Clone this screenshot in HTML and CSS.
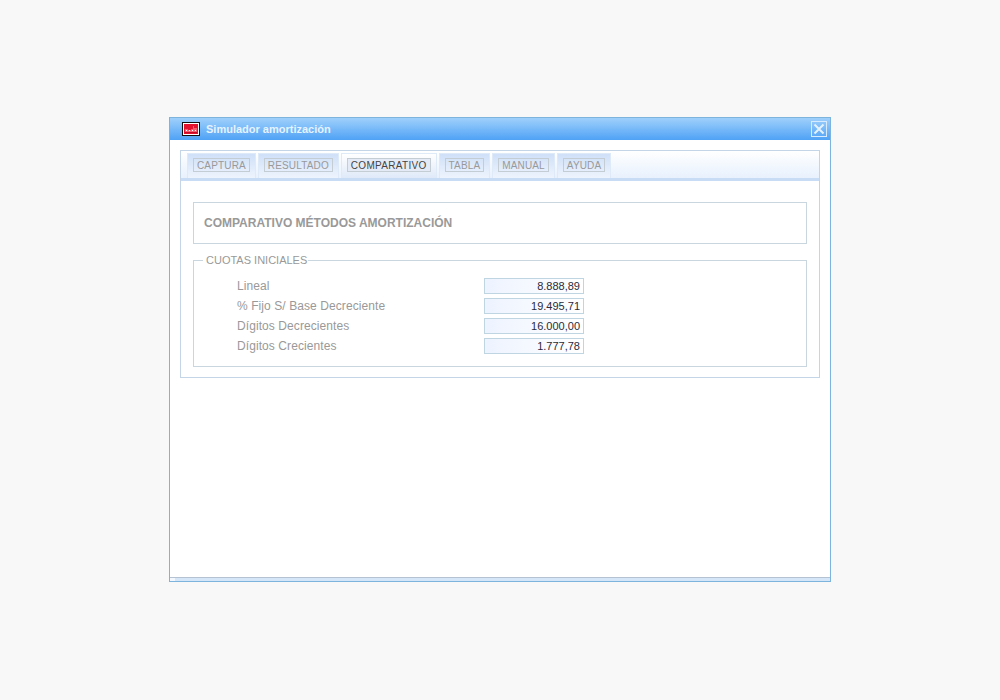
FILE: index.html
```html
<!DOCTYPE html>
<html lang="es">
<head>
<meta charset="utf-8">
<title>Simulador amortización</title>
<link rel="stylesheet" href="styles.css">
</head>
<body>
<div class="window">
  <div class="titlebar">
    <svg class="app-icon" width="18" height="14" viewBox="0 0 18 14">
      <rect x="0.5" y="0.5" width="17" height="13" fill="#e4122e" stroke="#111"/>
      <rect x="1.5" y="1.5" width="15" height="11" fill="none" stroke="#fff"/>
      <path d="M3 11V7h3v1h3V7h2V4h1v2h3v5z" fill="#f4606f"/>
      <path d="M4 8.5h1M7 8.5h1M10 8.5h1M13 8.5h1" stroke="#fff"/>
      <path d="M3 10.5h12" stroke="#c00c24"/>
    </svg>
    <span class="title">Simulador amortización</span>
    <svg class="close" width="16" height="16" viewBox="0 0 16 16">
      <rect x="0.5" y="0.5" width="15" height="15" fill="none" stroke="#d6ebff"/>
      <path d="M3.5 3.5l9 9M12.5 3.5l-9 9" stroke="#e4f2ff" stroke-width="2"/>
    </svg>
  </div>
  <div class="body">
    <div class="panel">
      <div class="tabs">
        <div class="tab"><span class="tab-label">CAPTURA</span></div>
        <div class="tab"><span class="tab-label">RESULTADO</span></div>
        <div class="tab active"><span class="tab-label">COMPARATIVO</span></div>
        <div class="tab"><span class="tab-label">TABLA</span></div>
        <div class="tab"><span class="tab-label">MANUAL</span></div>
        <div class="tab"><span class="tab-label">AYUDA</span></div>
      </div>
      <div class="content">
        <div class="heading">COMPARATIVO MÉTODOS AMORTIZACIÓN</div>
        <fieldset class="group">
          <legend>CUOTAS INICIALES</legend>
          <div class="row"><span class="label">Lineal</span><span class="value">8.888,89</span></div>
          <div class="row"><span class="label">% Fijo S/ Base Decreciente</span><span class="value">19.495,71</span></div>
          <div class="row"><span class="label">Dígitos Decrecientes</span><span class="value">16.000,00</span></div>
          <div class="row"><span class="label">Dígitos Crecientes</span><span class="value">1.777,78</span></div>
        </fieldset>
      </div>
    </div>
  </div>
  <div class="footer"><div class="footer-corner"></div></div>
</div>
</body>
</html>
```
FILE: styles.css
```css
html, body { margin: 0; padding: 0; }
body {
  background: #f8f8f8;
  font-family: "Liberation Sans", Arial, sans-serif;
  height: 700px;
  overflow: hidden;
  padding-top: 117px;
  box-sizing: border-box;
}
.window {
  width: 662px;
  height: 465px;
  margin: 0 auto;
  box-sizing: border-box;
  border: 1px solid #7db4de;
  background: #fff;
  display: flex;
  flex-direction: column;
}
.titlebar {
  height: 22px;
  flex: none;
  background: linear-gradient(to bottom, #9fd0fb, #4fa2f6);
  display: flex;
  align-items: center;
  padding: 0 3px 0 12px;
}
.app-icon { flex: none; }
.title {
  margin-left: 6px;
  color: #e6f3ff;
  font-size: 11px;
  font-weight: bold;
  flex: 1;
}
.close { flex: none; }
.body {
  flex: 1;
  padding: 10px 10px 0;
}
.panel {
  border: 1px solid #c3d5e6;
  height: 228px;
  box-sizing: border-box;
}
.tabs {
  height: 30px;
  box-sizing: border-box;
  display: flex;
  gap: 2px;
  padding: 2px 0 0 6px;
  background: linear-gradient(to bottom, #ffffff, #e8f1fd);
  border-bottom: 3px solid #c8dcf6;
}
.tab {
  height: 25px;
  box-sizing: border-box;
  padding: 4px 5px 0;
  background: linear-gradient(to bottom, #cfe0f8, #eef4fd);
  border: 1px solid #dfeaf8;
  border-bottom: none;
}
.tab.active {
  background: linear-gradient(to bottom, #fff, #dfe9f8);
}
.tab-label {
  display: block;
  height: 14px;
  line-height: 13px;
  box-sizing: border-box;
  padding: 0 3px;
  border: 1px solid #c4ccd4;
  font-size: 10px;
  letter-spacing: 0.15px;
  color: #999;
}
.active .tab-label {
  color: #444;
  background: #e4ebf6;
  letter-spacing: 0.3px;
}
.content {
  padding: 21px 12px 0;
}
.heading {
  height: 42px;
  box-sizing: border-box;
  border: 1px solid #c9d6e0;
  padding-left: 10px;
  line-height: 40px;
  font-size: 12px;
  font-weight: bold;
  color: #999;
}
.group {
  margin: 10px 0 0;
  padding: 9px 0 0;
  height: 113px;
  box-sizing: border-box;
  border: 1px solid #c9d6e0;
}
.group legend {
  margin-left: 9px;
  padding: 0 1px 0 3px;
  font-size: 11px;
  line-height: 13px;
  color: #999;
}
.row {
  display: flex;
  align-items: center;
  height: 20px;
  padding-left: 43px;
}
.label {
  width: 247px;
  font-size: 12px;
  letter-spacing: 0.08px;
  color: #999;
}
.value {
  width: 100px;
  height: 16px;
  box-sizing: border-box;
  border: 1px solid #bfd6e2;
  background: linear-gradient(to right, #edf3ff, #ffffff);
  text-align: right;
  font-size: 11px;
  line-height: 14px;
  padding-right: 3px;
  color: #2a2a3a;
}
.footer {
  height: 3px;
  flex: none;
  border-top: 1px solid #b4c2d2;
  background: #d4e6f8;
}
.footer-corner {
  width: 5px;
  height: 3px;
  background: #f2f8fd;
}
```
